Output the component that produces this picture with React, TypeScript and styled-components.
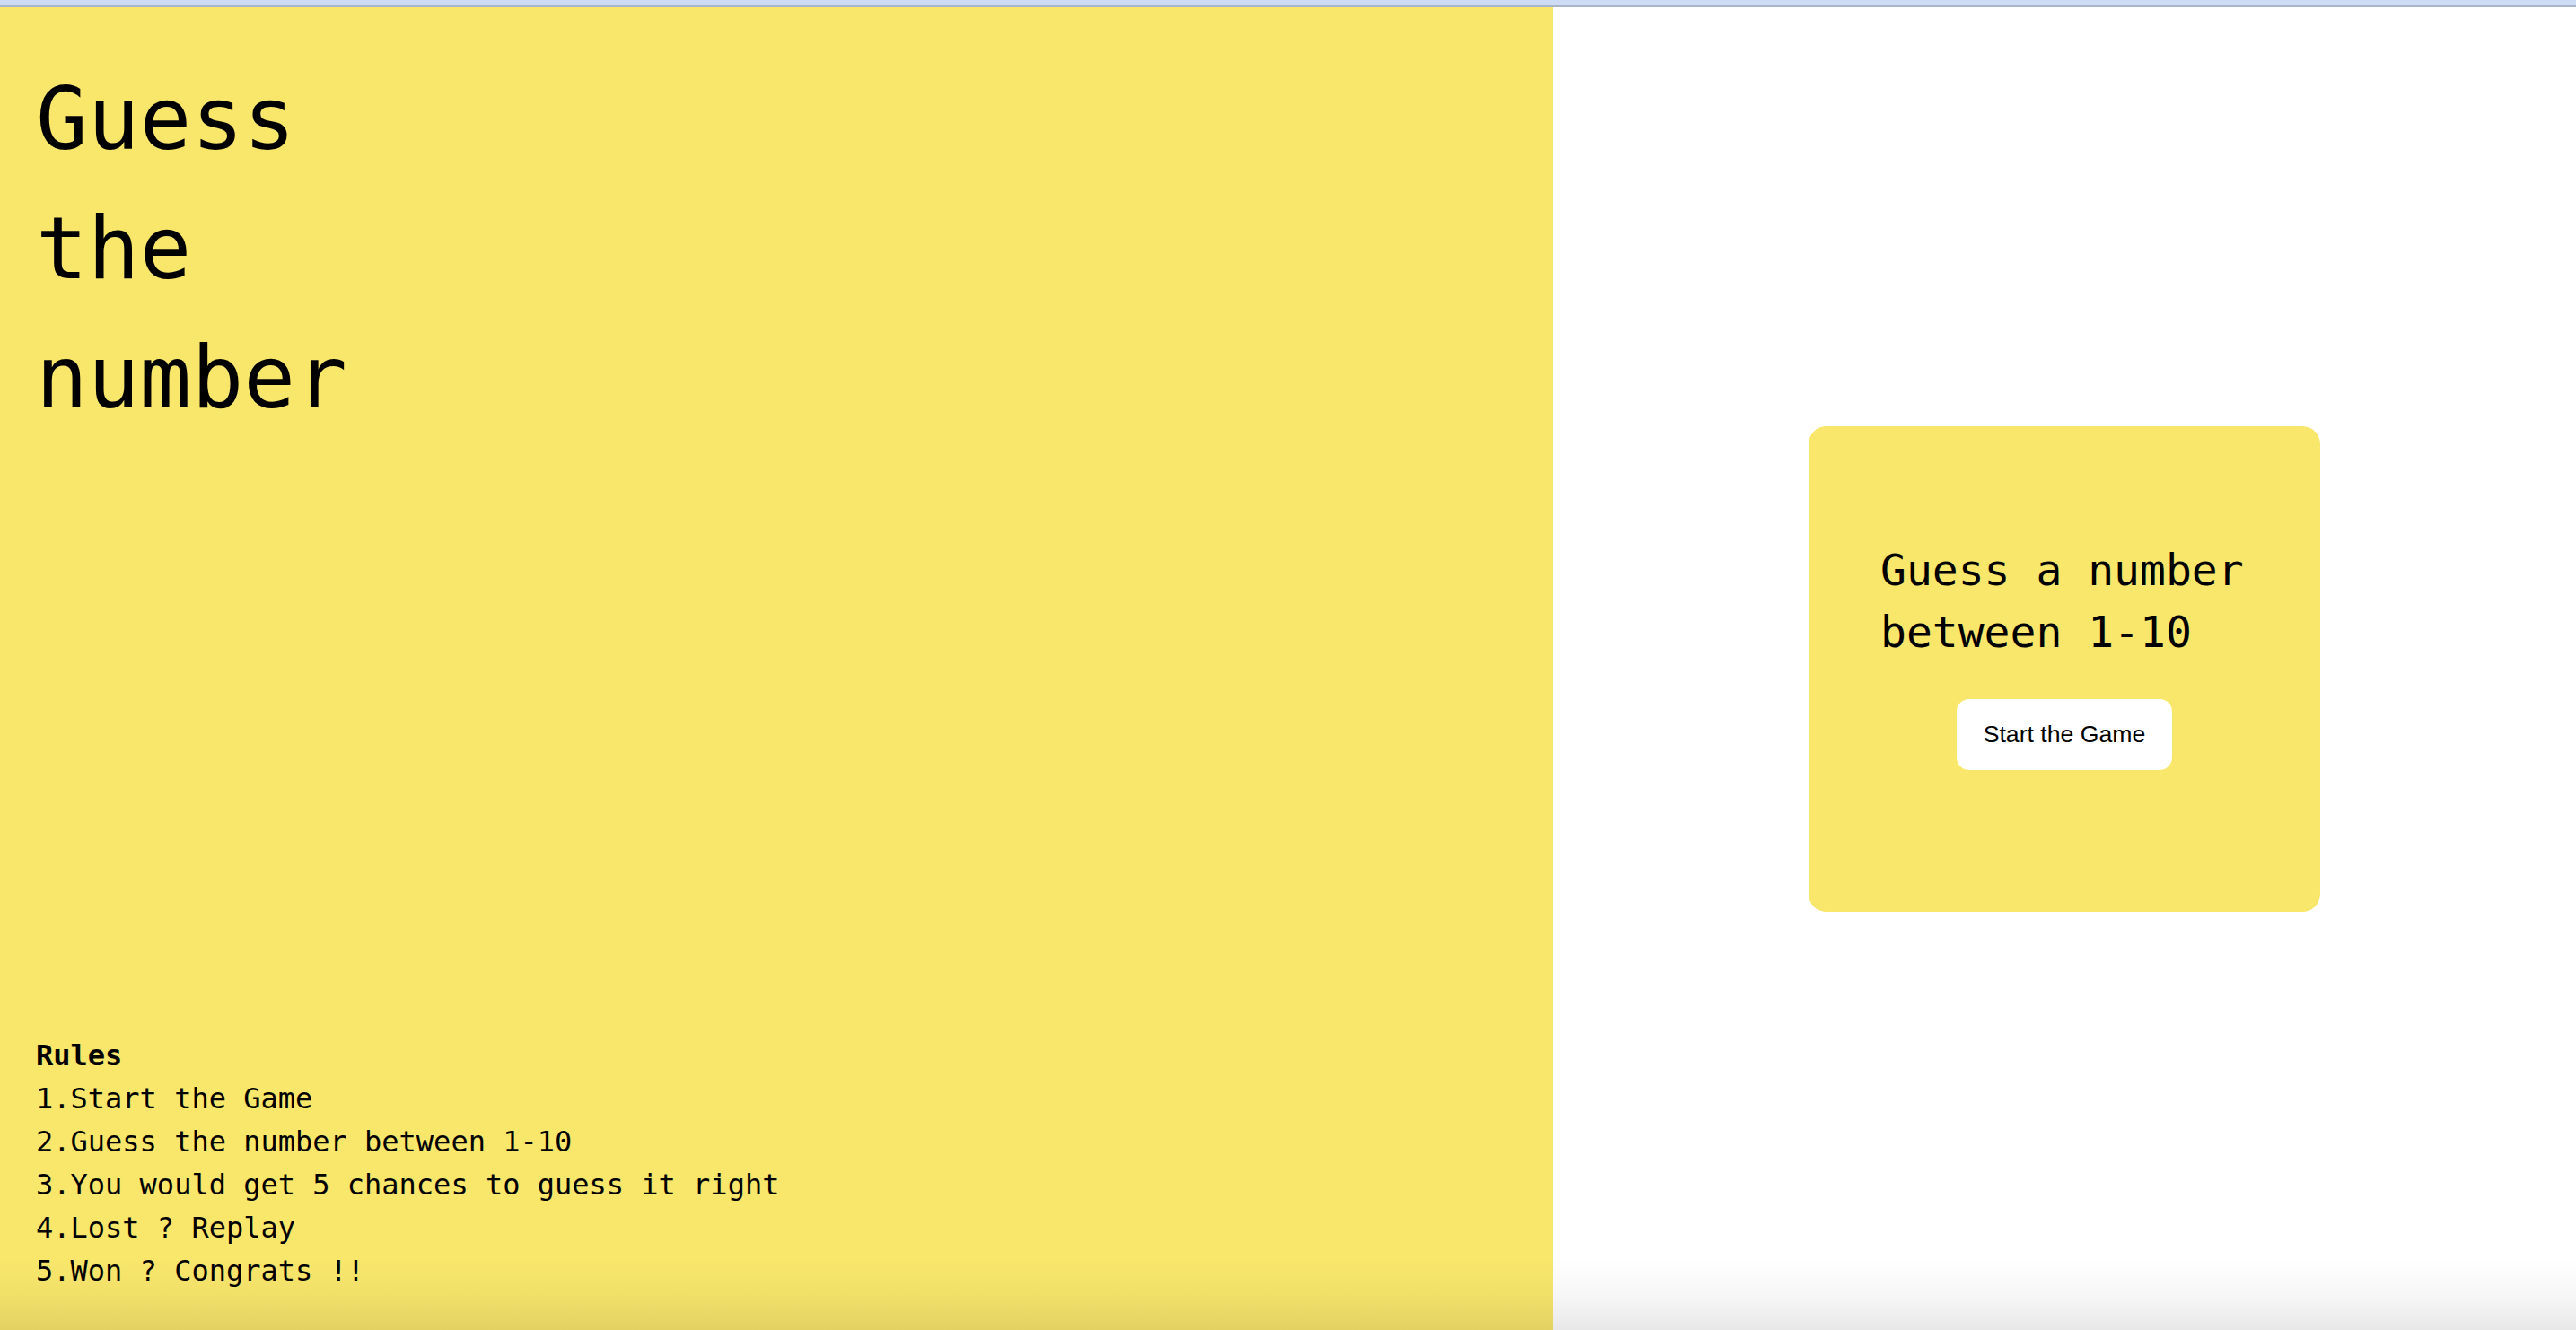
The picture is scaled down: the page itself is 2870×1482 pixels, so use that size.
import React from "react";
import styled, { createGlobalStyle } from "styled-components";

const GlobalStyle = createGlobalStyle`
  html, body {
    margin: 0;
    padding: 0;
    height: 100%;
    overflow: hidden;
    background: #ffffff;
  }
  #root {
    height: 100%;
  }
  * {
    box-sizing: border-box;
  }
`;

const YELLOW = "#f9e76c";
const MONO = `"DejaVu Sans Mono", "Liberation Mono", monospace`;

const Page = styled.div`
  height: 100vh;
  display: flex;
  flex-direction: column;
`;

const TopBar = styled.div`
  height: 8px;
  flex: none;
  background: #cddbf4;
  border-bottom: 2px solid #a9b5cb;
`;

const Main = styled.main`
  position: relative;
  flex: 1;
  display: flex;
  min-height: 0;
`;

const Shade = styled.div`
  position: absolute;
  left: 0;
  right: 0;
  bottom: 0;
  height: 80px;
  pointer-events: none;
  background: linear-gradient(to bottom, rgba(0, 0, 0, 0) 0%, rgba(0, 0, 0, 0.03) 50%, rgba(0, 0, 0, 0.09) 100%);
`;

const LeftPanel = styled.section`
  width: 1730px;
  flex: none;
  background: ${YELLOW};
  display: flex;
  flex-direction: column;
  justify-content: space-between;
  padding: 53px 0 42px 40px;
  color: #000;
  font-family: ${MONO};
`;

const Title = styled.h1`
  margin: 0;
  font-family: ${MONO};
  font-weight: 400;
  font-size: 96px;
  line-height: 144px;
  width: 400px;
`;

const Rules = styled.div`
  display: flex;
  flex-direction: column;
  font-size: 32px;
  line-height: 48px;
`;

const RulesTitle = styled.div`
  font-weight: 700;
`;

const RuleLine = styled.div`
  font-weight: 400;
  white-space: pre;
`;

const RightPanel = styled.section`
  flex: 1;
  display: flex;
  align-items: center;
  justify-content: center;
  background: #ffffff;
`;

const Card = styled.div`
  width: 570px;
  height: 541px;
  border-radius: 20px;
  background: ${YELLOW};
  display: flex;
  flex-direction: column;
  padding: 126px 80px 0 80px;
`;

const Prompt = styled.p`
  margin: 0;
  font-family: ${MONO};
  font-size: 48px;
  line-height: 69px;
  color: #000;
`;

const StartButton = styled.button`
  align-self: center;
  margin-top: 40px;
  padding: 24px 30px;
  border: none;
  border-radius: 14px;
  background: #ffffff;
  color: #000;
  font-family: "Liberation Sans", Arial, sans-serif;
  font-size: 26.67px;
  line-height: 31px;
  cursor: pointer;
`;

const rules = [
  "1.Start the Game",
  "2.Guess the number between 1-10",
  "3.You would get 5 chances to guess it right",
  "4.Lost ? Replay",
  "5.Won ? Congrats !!",
];

export default function App() {
  return (
    <>
      <GlobalStyle />
      <Page>
        <TopBar />
        <Main>
          <LeftPanel>
            <Title>Guess the number</Title>
            <Rules>
              <RulesTitle>Rules</RulesTitle>
              {rules.map((r) => (
                <RuleLine key={r}>{r}</RuleLine>
              ))}
            </Rules>
          </LeftPanel>
          <RightPanel>
            <Card>
              <Prompt>Guess a number between 1-10</Prompt>
              <StartButton>Start the Game</StartButton>
            </Card>
          </RightPanel>
          <Shade />
        </Main>
      </Page>
    </>
  );
}
